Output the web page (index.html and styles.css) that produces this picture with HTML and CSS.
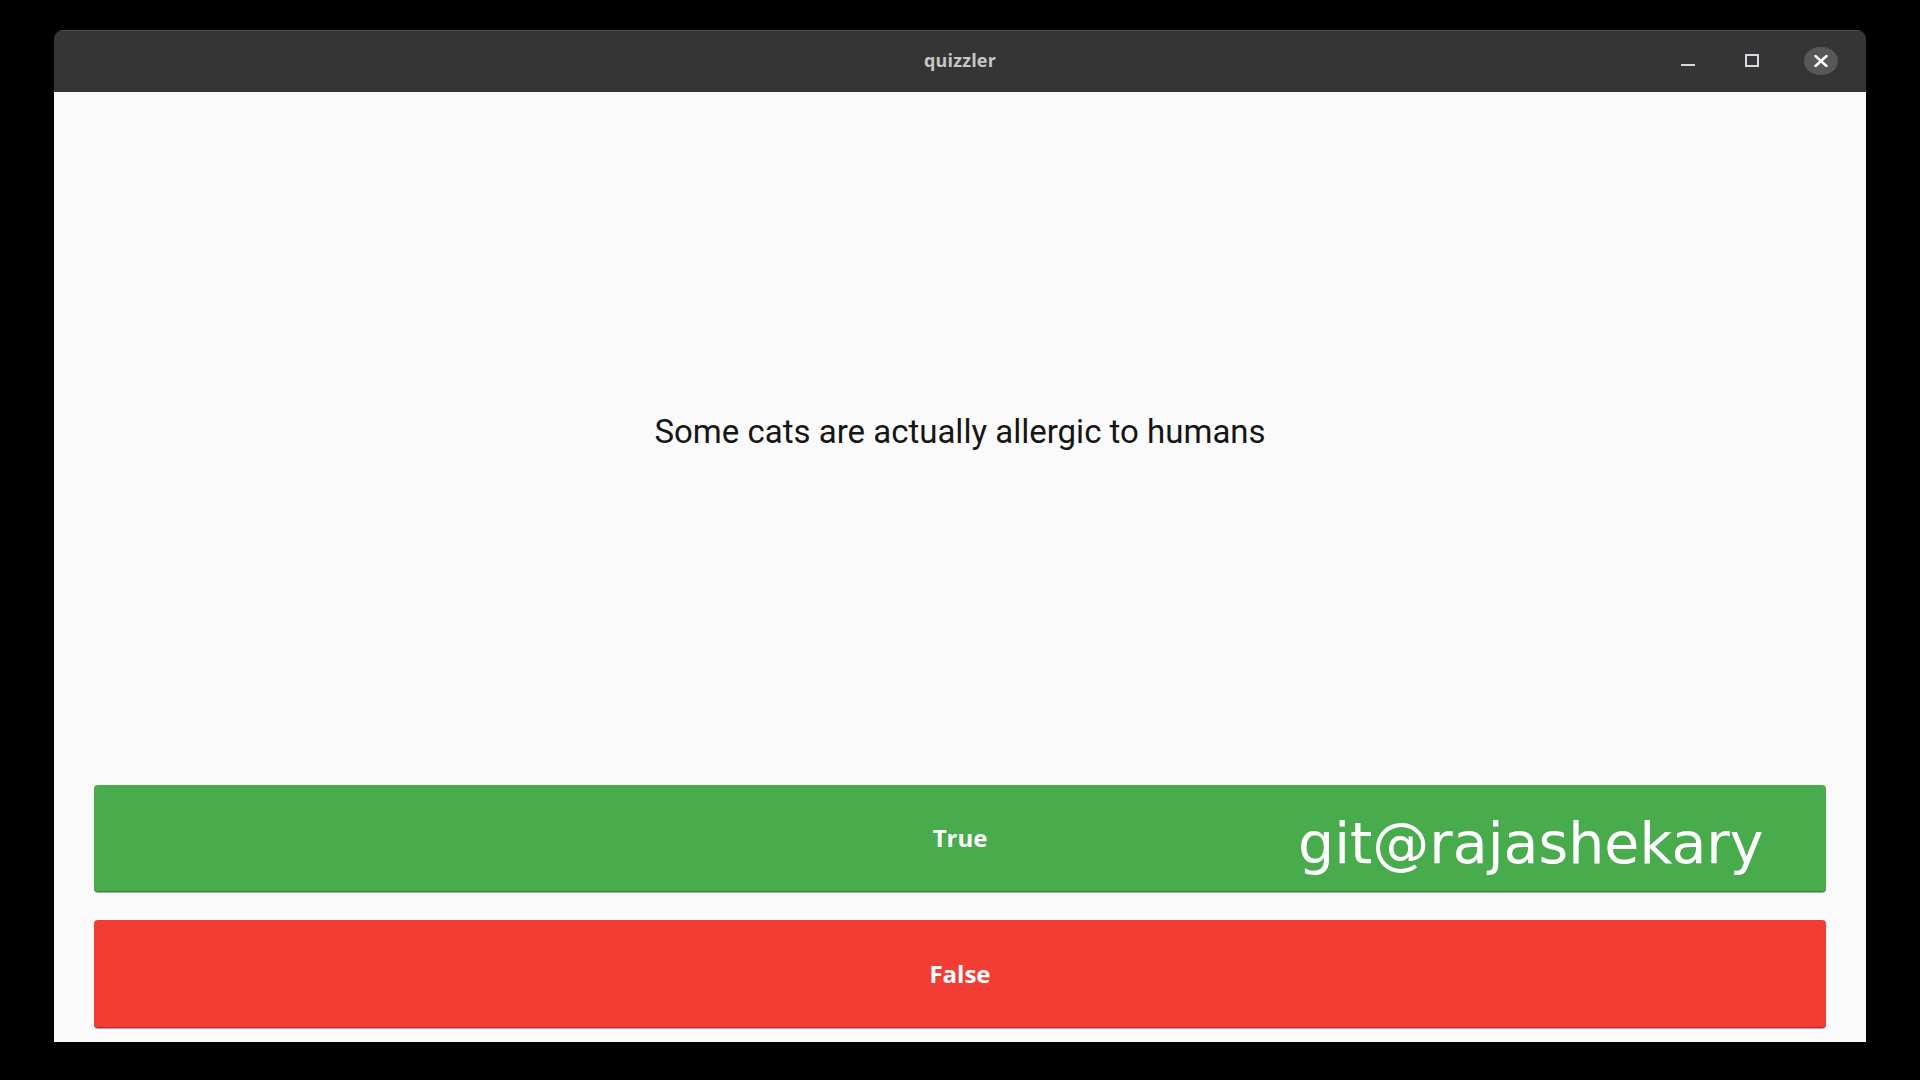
FILE: index.html
```html
<!DOCTYPE html>
<html>
<head>
<meta charset="utf-8">
<title>quizzler</title>
<link rel="stylesheet" href="styles.css">
</head>
<body>
<div class="window">
  <header class="titlebar">
    <div class="title">quizzler</div>
    <div class="controls">
      <span class="ctl ctl-min"><svg width="14" height="4" viewBox="0 0 14 4"><rect x="0" y="1" width="14" height="2" fill="#d8d8e0"/></svg></span>
      <span class="ctl ctl-max"><svg width="14" height="13" viewBox="0 0 14 13"><rect x="1" y="1" width="12" height="11" fill="none" stroke="#d8d8e0" stroke-width="2"/></svg></span>
      <span class="ctl ctl-close"><svg width="14" height="12" viewBox="0 0 14 12"><path d="M1.5 1 L12.5 11 M12.5 1 L1.5 11" stroke="#ffffff" stroke-width="2.4" stroke-linecap="round"/></svg></span>
    </div>
  </header>
  <main class="content">
    <section class="question">
      <p class="question-text">Some cats are actually allergic to humans</p>
    </section>
    <div class="answer">
      <button class="btn btn-true">True</button>
      <span class="watermark">git@rajashekary</span>
    </div>
    <div class="answer">
      <button class="btn btn-false">False</button>
    </div>
  </main>
</div>
</body>
</html>
```
FILE: styles.css
```css
html, body {
  margin: 0;
  padding: 0;
  background: #000;
  width: 1920px;
  height: 1080px;
  overflow: hidden;
}
body {
  padding: 30px 54px 38px 54px;
  box-sizing: border-box;
}
.window {
  width: 1812px;
  height: 1012px;
  display: flex;
  flex-direction: column;
  border-radius: 9px 9px 0 0;
  overflow: hidden;
}
.titlebar {
  height: 62px;
  flex: 0 0 62px;
  background: #353535;
  border-top: 1px solid #4a4a4a;
  box-sizing: border-box;
  position: relative;
  display: flex;
  align-items: center;
  justify-content: center;
}
.title {
  font-family: "Open Sans", "DejaVu Sans", sans-serif;
  font-weight: 700;
  font-size: 18px;
  color: #c6c6c8;
  letter-spacing: 0.2px;
  margin-top: -4px;
}
.controls {
  position: absolute;
  right: 28px;
  top: 0;
  height: 100%;
  display: flex;
  align-items: center;
}
.ctl {
  display: flex;
  align-items: center;
  justify-content: center;
}
.ctl-min {
  width: 14px;
  margin-right: 50px;
  padding-top: 7px;
}
.ctl-max {
  width: 14px;
  margin-right: 45px;
  margin-top: -2px;
}
.ctl-close {
  width: 34px;
  height: 28px;
  border-radius: 50%;
  background: #585858;
  margin-top: -2px;
}
.content {
  flex: 1;
  min-height: 0;
  background: #fafafa;
  display: grid;
  grid-template-rows: 5fr 1fr 1fr;
  padding: 0 40px;
}
.question {
  min-height: 0;
  display: flex;
  align-items: center;
  justify-content: center;
}
.question-text {
  margin: 0;
  font-family: Roboto, "Noto Sans", sans-serif;
  font-size: 33px;
  color: #161616;
  text-align: center;
}
.answer {
  min-height: 0;
  padding: 14px 0;
  display: flex;
  position: relative;
  box-sizing: border-box;
}
.btn {
  flex: 1;
  border: none;
  border-radius: 4px;
  font-family: "Open Sans", "DejaVu Sans", sans-serif;
  font-weight: 700;
  font-size: 24px;
  color: #ffffff;
  cursor: pointer;
  box-shadow: 0 1px 1px rgba(0,0,0,0.35);
  padding: 0;
}
.btn-true {
  background: #48ab4c;
  border-bottom: 1px solid #338a36;
}
.btn-false {
  background: #f13d33;
  border-bottom: 1px solid #c42820;
}
.watermark {
  position: absolute;
  left: 1204px;
  top: 14px;
  bottom: 14px;
  display: flex;
  align-items: center;
  font-family: "DejaVu Sans", sans-serif;
  font-size: 57px;
  color: #ffffff;
  pointer-events: none;
  padding-top: 10px;
  box-sizing: border-box;
}
```
